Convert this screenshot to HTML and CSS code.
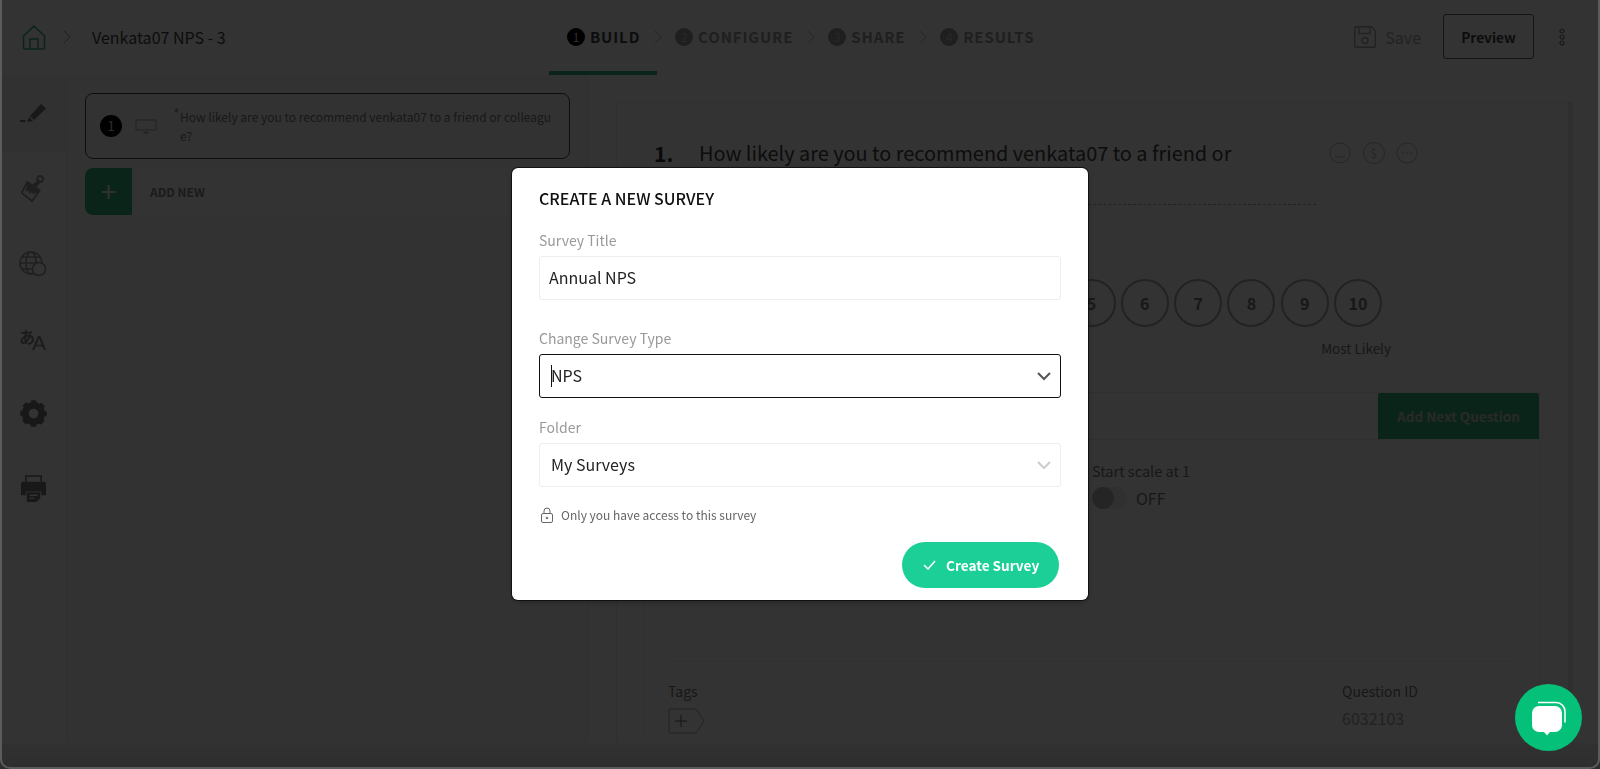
FILE: index.html
```html
<!DOCTYPE html>
<html lang="en">
<head>
    <meta charset="UTF-8">
    <title>Venkata07 NPS - 3</title>
    <link rel="stylesheet" href="styles.css">
</head>
<body>
<div class="app">
    <header class="topbar">
        <div class="crumbs">
            <svg class="home" viewBox="0 0 24 25" width="24" height="25" fill="none" stroke="#37b47d" stroke-width="1.6"><path d="M1.500 11 12 1.200 22.500 11v11.500a1.500 1.500 0 0 1-1.500 1.500H3a1.500 1.500 0 0 1-1.500-1.500z"/><path d="M8 24V14h8v10"/></svg>
            <svg class="crumb-arrow" viewBox="0 0 8 14" width="8" height="14" fill="none" stroke="#999" stroke-width="1"><path d="m1 1 6 6-6 6"/></svg>
            <span class="survey-name">Venkata07 NPS - 3</span>
        </div>
        <nav class="steps">
            <div class="step active"><i>1</i>BUILD</div>
            <svg class="step-arrow" viewBox="0 0 8 14" width="8" height="14" fill="none" stroke="#bbb" stroke-width="1"><path d="m1 1 6 6-6 6"/></svg>
            <div class="step"><i>2</i>CONFIGURE</div>
            <svg class="step-arrow" viewBox="0 0 8 14" width="8" height="14" fill="none" stroke="#bbb" stroke-width="1"><path d="m1 1 6 6-6 6"/></svg>
            <div class="step"><i>3</i>SHARE</div>
            <svg class="step-arrow" viewBox="0 0 8 14" width="8" height="14" fill="none" stroke="#bbb" stroke-width="1"><path d="m1 1 6 6-6 6"/></svg>
            <div class="step"><i>4</i>RESULTS</div>
        </nav>
        <div class="actions">
            <svg viewBox="0 0 24 24" width="24" height="24" fill="none" stroke="#aaa" stroke-width="1.400"><path d="M1.700 3a1.300 1.300 0 0 1 1.300-1.300h15.500L22.300 6v15a1.300 1.300 0 0 1-1.300 1.300H3A1.300 1.300 0 0 1 1.700 21z"/><path d="M6 2v6.500h11V2"/><circle cx="12" cy="15.500" r="3"/></svg>
            <span class="save">Save</span>
            <button class="preview">Preview</button>
            <svg class="dots" viewBox="0 0 8 18" width="8" height="18" fill="none" stroke="#777" stroke-width="1.200"><circle cx="4" cy="3" r="2"/><circle cx="4" cy="9" r="2"/><circle cx="4" cy="15" r="2"/></svg>
        </div>
    </header>

    <div class="workspace">
        <aside class="rail">
            <div class="rail-item current">
                <svg viewBox="0 0 26 20" width="26" height="20" fill="#777"><path d="M10 12 21 0l5 4.500L14 16z"/><path d="M7 18l2-5 4 4z"/><path d="M0 16h5.500v2H0z"/></svg>
            </div>
            <div class="rail-item">
                <svg viewBox="0 0 24 28" width="24" height="28"><path d="M.7 17.700 11 26.300l7.700-11L6.300 7z" fill="none" stroke="#999" stroke-width="1.800"/><path d="M6.300 7l12.400 8.300-3 4.300-1.700-2-1 2.500-2.500-3-1.500 2.500-2-4-2.500 1.500zM11 10l7-6 2 2.500-5 6.500z" fill="#999"/><circle cx="19" cy="4" r="3" fill="none" stroke="#999" stroke-width="1.800"/></svg>
            </div>
            <div class="rail-item">
                <svg viewBox="0 0 28 26" width="28" height="26" fill="none" stroke="#999" stroke-width="1.500"><circle cx="12" cy="12" r="11"/><ellipse cx="12" cy="12" rx="5" ry="11"/><path d="M1 12h22M3 6h18M3 18h18"/><circle cx="20" cy="18" r="6.500" fill="#fff"/></svg>
            </div>
            <div class="rail-item">
                <span class="lang-a">あ</span><span class="lang-b">A</span>
            </div>
            <div class="rail-item">
                <svg viewBox="0 0 28 28" width="27" height="27" fill="none" stroke="#777"><circle cx="14" cy="14" r="8.500" stroke-width="7"/><circle cx="14" cy="14" r="12" stroke-width="3.600" stroke-dasharray="5.400 4.020" stroke-dashoffset="2.700"/></svg>
            </div>
            <div class="rail-item">
                <svg viewBox="0 0 28 28" width="27" height="27"><path d="M6 7V1h16v6" fill="none" stroke="#777" stroke-width="1.600"/><path d="M3 7h22a2 2 0 0 1 2 2v11a1 1 0 0 1-1 1h-4v-4H6v4H2a1 1 0 0 1-1-1V9a2 2 0 0 1 2-2z" fill="#777"/><path d="M7 18h14v6l-4 4H7z" fill="#777"/><path d="M10 21h8M10 24h5" stroke="#fff" stroke-width="1.300"/></svg>
            </div>
        </aside>

        <section class="questions">
            <div class="question-card">
                <span class="q-badge">1</span>
                <svg class="q-screen" viewBox="0 0 22 15" width="22" height="15" fill="none" stroke="#aaa" stroke-width="1"><path d="M1 1h20v10H1z"/><path d="M7 14.500h8l-4-2.500z" fill="#aaa" stroke="none"/></svg>
                <span class="q-star">*</span>
                <p class="q-text">How likely are you to recommend venkata07 to a friend or colleagu<br>e?</p>
            </div>
            <div class="add-new">
                <span class="add-plus">+</span>
                <span class="add-label">ADD NEW</span>
            </div>
        </section>

        <main class="editor">
            <div class="sheet">
                <div class="question-head">
                    <b class="q-number">1.</b>
                    <div class="q-title">How likely are you to recommend venkata07 to a friend or<br>colleague?</div>
                    <div class="q-tools">
                        <svg viewBox="0 0 22 22" width="22" height="22" fill="none" stroke="#bbb" stroke-width="1"><circle cx="11" cy="11" r="10"/><path d="M5.500 12.500c2 4 9 4 11 0"/></svg>
                        <span class="q-tool">$</span>
                        <svg viewBox="0 0 22 22" width="22" height="22" fill="none" stroke="#bbb" stroke-width="1"><circle cx="11" cy="11" r="10"/><path d="M6 11h1.500M10.200 11h1.500M14.500 11H16" stroke-width="1.400"/></svg>
                    </div>
                </div>
                <div class="scale">
                    <span class="dial">1</span><span class="dial">2</span><span class="dial">3</span><span class="dial">4</span><span class="dial">5</span><span class="dial">6</span><span class="dial">7</span><span class="dial">8</span><span class="dial">9</span><span class="dial">10</span>
                </div>
                <div class="scale-note">Most Likely</div>
                <div class="panel">
                    <div class="panel-tabs"><button class="next-q">Add Next Question</button></div>
                    <div class="panel-body">
                        <div class="option">
                            <span>Start scale at 1</span>
                            <div class="switch-row"><span class="switch"></span><span class="switch-text">OFF</span></div>
                        </div>
                    </div>
                    <div class="panel-foot">
                        <div>
                            <div class="foot-label">Tags</div>
                            <svg class="tag" viewBox="0 0 38 26" width="38" height="26" fill="none" stroke="#aaa" stroke-width="1"><path d="M1 2a1 1 0 0 1 1-1h26l8 12-8 12H2a1 1 0 0 1-1-1z"/><path d="M13 7v12M7 13h12" stroke="#666"/></svg>
                        </div>
                        <div>
                            <div class="foot-label">Question ID</div>
                            <div class="foot-id">6032103</div>
                        </div>
                    </div>
                </div>
            </div>
            <div class="scrollbar"></div>
        </main>
    </div>
    <div class="app-foot"></div>
</div>

<div class="overlay">
    <div class="modal">
        <h2>CREATE A NEW SURVEY</h2>
        <label class="field-label">Survey Title</label>
        <div class="field title-field">Annual NPS</div>
        <label class="field-label">Change Survey Type</label>
        <div class="field select focused">
            <span class="caret"></span>NPS
            <svg viewBox="0 0 14 9" width="14" height="9" fill="none" stroke="#555" stroke-width="2"><path d="m1 1 6 6 6-6"/></svg>
        </div>
        <label class="field-label">Folder</label>
        <div class="field select">
            My Surveys
            <svg viewBox="0 0 14 9" width="14" height="9" fill="none" stroke="#ccc" stroke-width="2"><path d="m1 1 6 6 6-6"/></svg>
        </div>
        <div class="access">
            <svg viewBox="0 0 12 16" width="12" height="16" fill="none" stroke="#666" stroke-width="1"><path d="M3 7V4a3 3 0 0 1 6 0v3"/><rect x="0.500" y="6.500" width="11" height="9" rx="1.500"/><circle cx="6" cy="11" r="0.800" fill="#666"/></svg>
            Only you have access to this survey
        </div>
        <div class="modal-foot">
            <button class="create">
                <svg viewBox="0 0 13 10" width="13" height="10" fill="none" stroke="#fff" stroke-width="1.500"><path d="m1 5 4 4 7-8"/></svg>
                Create Survey
            </button>
        </div>
    </div>
</div>

<button class="chat">
    <svg viewBox="0 0 36 36" width="36" height="36"><path d="M7 2.500h18a9 9 0 0 1 9 9v11" fill="none" stroke="#fff" stroke-width="1.500"/><path d="M8 6h16a7 7 0 0 1 7 7v12a7 7 0 0 1-7 7h-5l-3 3.500-3-3.500H8a7 7 0 0 1-7-7V13a7 7 0 0 1 7-7z" fill="#fff"/></svg>
</button>
</body>
</html>
```

FILE: styles.css
```css
* {
    box-sizing: border-box;
}
html, body {
    height: 100%;
}
body {
    margin: 0;
    overflow: hidden;
    font-family: "Noto Sans CJK SC", "Noto Sans", sans-serif;
    color: #555;
    background-color: #fdfdfd;
}
button {
    font-family: inherit;
}
.app {
    display: flex;
    flex-direction: column;
    height: 100%;
}

/* top bar */
.topbar {
    display: grid;
    grid-template-columns: 549px 1fr auto;
    height: 75px;
    flex: none;
}
.crumbs {
    display: flex;
    align-items: center;
    padding-left: 22px;
}
.crumb-arrow {
    margin-left: 17px;
    margin-bottom: 1px;
}
.survey-name {
    margin-left: 21px;
    margin-bottom: 2px;
    font-size: 16px;
    line-height: 24px;
    color: #444;
}
.steps {
    display: flex;
    align-items: center;
    position: relative;
    padding-left: 18px;
    padding-bottom: 2px;
    gap: 13.400px;
}
.steps::after {
    content: "";
    position: absolute;
    left: 0;
    bottom: 0;
    width: 108px;
    height: 4px;
    background-color: #37b47d;
}
.step {
    display: flex;
    align-items: center;
    gap: 5px;
    font-size: 15px;
    line-height: 24px;
    font-weight: 600;
    letter-spacing: .9px;
    color: #999;
}
.step i {
    display: flex;
    align-items: center;
    justify-content: center;
    width: 18px;
    height: 18px;
    border-radius: 50%;
    font-style: normal;
    font-weight: 400;
    font-size: 12px;
    letter-spacing: 0;
    color: #ccc;
    background-color: #999;
}
.step.active {
    color: #444;
}
.step.active i {
    color: #ddd;
    background-color: #000;
}
.actions {
    display: flex;
    align-items: center;
    padding-right: 34px;
    padding-bottom: 2px;
}
.save {
    margin-left: 8px;
    font-size: 16px;
    line-height: 24px;
    color: #aaa;
}
.preview {
    width: 91px;
    height: 45px;
    margin-left: 22px;
    margin-right: 24px;
    border: 1px solid #666;
    border-radius: 3px;
    background: none;
    font-size: 13.700px;
    font-weight: 600;
    color: #444;
}

/* sidebar */
.workspace {
    display: flex;
    flex: 1;
    min-height: 0;
    overflow: hidden;
}
.rail {
    width: 67px;
    flex: none;
    padding-top: 1px;
    border-right: 1px solid #eee;
}
.rail-item {
    display: flex;
    align-items: center;
    justify-content: center;
    position: relative;
    height: 75px;
}
.rail-item.current {
    background-color: #f4f4f4;
}
.lang-a {
    position: absolute;
    left: 19px;
    top: 27px;
    font-size: 16px;
    line-height: 16px;
    font-weight: 700;
    color: #888;
}
.lang-b {
    position: absolute;
    left: 32px;
    top: 31px;
    font-family: "Liberation Sans", sans-serif;
    font-size: 21px;
    line-height: 22px;
    color: #888;
}

/* question list */
.questions {
    width: 521px;
    flex: none;
    padding: 18px 17px 0 18px;
    background-color: #fbfbfb;
    border-right: 1px solid #eee;
}
.question-card {
    display: flex;
    align-items: center;
    height: 66px;
    padding-left: 14px;
    border: 1px solid #444;
    border-radius: 8px;
}
.q-badge {
    display: flex;
    align-items: center;
    justify-content: center;
    flex: none;
    width: 22px;
    height: 22px;
    border-radius: 50%;
    font-size: 13px;
    line-height: 22px;
    color: #ddd;
    background-color: #000;
}
.q-screen {
    margin-left: 13px;
    flex: none;
}
.q-star {
    align-self: flex-start;
    width: 6px;
    margin: 13px 0 0 17px;
    font-family: "Liberation Sans", sans-serif;
    font-size: 12px;
    line-height: 12px;
    color: #777;
}
.q-text {
    margin: 0;
    font-size: 12px;
    line-height: 19px;
    color: #777;
}
.add-new {
    display: flex;
    align-items: center;
    height: 47px;
    margin-top: 9px;
    border-radius: 8px;
    background-color: #fff;
}
.add-plus {
    width: 47px;
    height: 47px;
    border-radius: 8px 0 0 8px;
    font-size: 28px;
    line-height: 44px;
    text-align: center;
    color: #eee;
    background-color: #37b47d;
}
.add-label {
    margin-left: 18px;
    font-size: 12px;
    line-height: 16px;
    font-weight: 700;
    color: #888;
}

/* editor */
.editor {
    display: flex;
    flex: 1;
    min-width: 0;
    padding: 27px 0 0 28px;
}
.sheet {
    flex: 1;
    min-width: 0;
    padding: 0 28px 0 27px;
    border-left: 1px solid #eee;
    border-top: 1px solid #eee;
}
.question-head {
    display: flex;
    height: 102px;
    margin-left: 10px;
    padding-top: 32px;
}
.q-number {
    width: 45px;
    font-size: 21px;
    line-height: 36px;
    color: #333;
}
.q-title {
    width: 617px;
    height: 70px;
    font-size: 19.900px;
    line-height: 36px;
    color: #444;
    border-bottom: 1px dashed #aaa;
}
.q-tools {
    display: flex;
    align-items: center;
    gap: 11.500px;
    height: 22px;
    margin: 7px 0 0 13px;
}
.q-tool {
    display: flex;
    align-items: center;
    justify-content: center;
    width: 22px;
    height: 22px;
    border: 1px solid #bbb;
    border-radius: 50%;
    font-size: 12px;
    line-height: 20px;
    color: #bbb;
}
.scale {
    display: flex;
    justify-content: flex-end;
    gap: 5.300px;
    margin-top: 74px;
    margin-right: 158px;
}
.dial {
    display: flex;
    align-items: center;
    justify-content: center;
    width: 48px;
    height: 48px;
    border: 2px solid #aaa;
    border-radius: 50%;
    font-size: 16px;
    line-height: 24px;
    font-weight: 700;
    color: #777;
}
.scale-note {
    margin-top: 11px;
    padding-right: 149px;
    text-align: right;
    font-size: 13.500px;
    line-height: 20px;
    color: #777;
}
.panel {
    margin-top: 34px;
    border-left: 1px solid #eee;
    border-right: 1px solid #eee;
}
.panel-tabs {
    display: flex;
    justify-content: flex-end;
    border-bottom: 1px solid #eee;
    border-top: 1px solid #eee;
}
.next-q {
    width: 161px;
    height: 46px;
    border: 0;
    border-radius: 2px 2px 0 0;
    font-size: 13.500px;
    font-weight: 600;
    color: #ccc;
    background-color: #37b47d;
}
.panel-body {
    display: flex;
    justify-content: flex-end;
    height: 221px;
    padding: 20px 0 0;
}
.option {
    width: 447px;
    font-size: 14.500px;
    line-height: 22px;
    color: #777;
}
.switch-row {
    display: flex;
    align-items: center;
    gap: 9px;
    margin-top: 5px;
}
.switch {
    display: block;
    position: relative;
    width: 35px;
    height: 22px;
    border-radius: 11px;
    background-color: #eee;
}
.switch::before {
    content: "";
    position: absolute;
    left: 0;
    top: 0;
    width: 22px;
    height: 22px;
    border-radius: 50%;
    background-color: #bbb;
}
.switch-text {
    font-size: 16px;
    color: #777;
}
.panel-foot {
    display: flex;
    justify-content: space-between;
    margin: 0 23px;
    padding-top: 19px;
    padding-right: 98px;
    border-top: 1px solid #eee;
}
.foot-label {
    font-size: 14px;
    line-height: 20px;
    color: #777;
}
.tag {
    display: block;
    margin-top: 7px;
}
.foot-id {
    margin-top: 7px;
    font-size: 16px;
    line-height: 20px;
    color: #aaa;
}
.scrollbar {
    width: 5px;
    margin-right: 27px;
    background-color: #e8e8e8;
}
.app-foot {
    flex: none;
    height: 26px;
    background-image: linear-gradient(#f4f4f4, #e4e4e4);
}

/* modal */
.overlay {
    position: fixed;
    inset: 0;
    display: flex;
    align-items: center;
    justify-content: center;
    background-color: rgba(0, 0, 0, .8);
}
.overlay::after {
    content: "";
    position: absolute;
    inset: 0;
    border: 2px solid #5c5c5c;
    border-top: 0;
    border-radius: 0 0 10px 10px;
    pointer-events: none;
}
.modal {
    width: 576px;
    height: 432px;
    margin-bottom: 1px;
    padding: 19px 27px 0;
    border-radius: 6px;
    background-color: #fff;
    box-shadow: 0 0 0 1px rgba(0, 0, 0, .6), 0 2px 6px rgba(0, 0, 0, .3);
}
.modal h2 {
    margin: 0 0 21px;
    font-size: 16px;
    line-height: 22px;
    font-weight: 500;
    color: #111;
}
.field-label {
    display: block;
    font-size: 14px;
    line-height: 20px;
    color: #999;
}
.field {
    display: flex;
    align-items: center;
    height: 44px;
    margin: 6px 0 28px;
    padding: 0 11px 2px;
    border: 1px solid #eee;
    border-radius: 3px;
    font-size: 16px;
    line-height: 24px;
    color: #222;
}
.title-field {
    padding-left: 9px;
}
.select {
    position: relative;
    margin-bottom: 19px;
}
.select svg {
    position: absolute;
    right: 9px;
    top: 17px;
}
.focused {
    border-color: #111;
}
.caret {
    position: absolute;
    left: 11px;
    top: 10px;
    width: 1px;
    height: 22px;
    background-color: #111;
}
.select:last-of-type {
    margin-bottom: 0;
}
.access {
    display: flex;
    align-items: center;
    gap: 8px;
    margin-top: 6px;
    padding-left: 2px;
    font-size: 12px;
    line-height: 18px;
    color: #666;
}
.modal-foot {
    display: flex;
    justify-content: flex-end;
    margin-top: 18px;
    padding-right: 2px;
}
.create {
    display: flex;
    align-items: center;
    gap: 10px;
    width: 157px;
    height: 46px;
    padding: 0 0 0 21px;
    border: 0;
    border-radius: 23px;
    font-size: 13.600px;
    font-weight: 600;
    color: #fff;
    background-color: #1bcf96;
}

/* chat launcher */
.chat {
    position: fixed;
    left: 1515px;
    top: 684px;
    display: flex;
    align-items: center;
    justify-content: center;
    width: 67px;
    height: 67px;
    padding: 0;
    border: 0;
    border-radius: 50%;
    background-color: #04c078;
}
```
